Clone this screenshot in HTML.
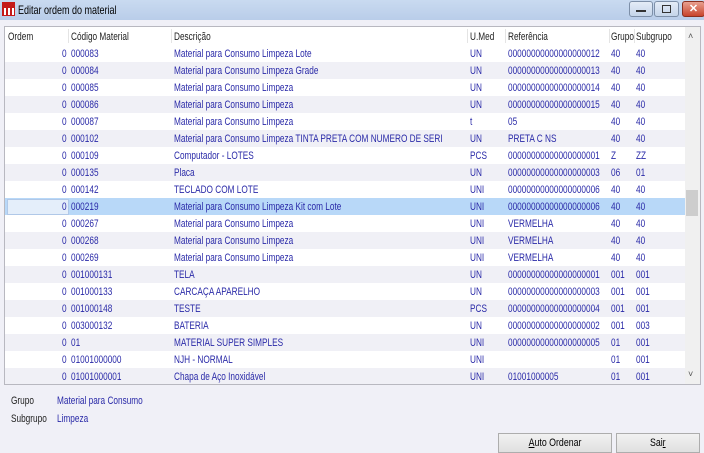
<!DOCTYPE html>
<html><head><meta charset="utf-8"><style>
body{margin:0;width:704px;height:453px;background:#f0f0f7;font-family:"Liberation Sans",sans-serif;font-size:11px;position:relative;overflow:hidden}
.s{display:inline-block;transform:scaleX(0.75);transform-origin:left top;white-space:nowrap}
.tb{position:absolute;left:0;top:0;width:704px;height:20px;background:linear-gradient(#c9daf0,#b9cde9)}
.tb .t{position:absolute;left:18px;top:3px;font-size:12px;color:#000}
.wb{position:absolute;top:1px;height:14px;border:1px solid #7d8fa8;border-radius:3px;background:linear-gradient(#e4ecf7,#c5d5ea)}
.grid{position:absolute;left:4px;top:26px;width:695px;height:357px;background:#fff;border:1px solid #b8b8c0;overflow:hidden}
.hd{position:absolute;top:0;left:0;height:18px;width:680px;background:#fff}
.hd span{position:absolute;top:4px;color:#222}
.r{position:absolute;left:0;width:680px;height:17px}
.r span{position:absolute;top:3px;color:#2a2aa8}
.sb{position:absolute;left:680px;top:0;width:15px;height:357px;background:#f0f0f0}
.lbl{position:absolute;color:#222}
.v{position:absolute;color:#2a2aa8}
.btn{position:absolute;top:433px;height:18px;border:1px solid #adadad;background:linear-gradient(#f2f2f2,#e0e0e0);text-align:center;line-height:18px;color:#000}
.btn i{font-style:normal;display:inline-block;transform:scaleX(0.8)}
</style></head><body>
<div class="tb"><svg style="position:absolute;left:2px;top:2px" width="13" height="14"><rect x="0" y="0" width="13" height="14" fill="#c41a1a"/><rect x="2" y="6" width="2" height="7" fill="#fff"/><rect x="6" y="6" width="2" height="7" fill="#fff"/><rect x="10" y="6" width="2" height="7" fill="#fff"/></svg><span class="t s">Editar ordem do material</span></div>
<div class="wb" style="left:629px;width:22px"><div style="position:absolute;left:6px;top:8px;width:10px;height:2px;background:#333"></div></div>
<div class="wb" style="left:654px;width:23px"><div style="position:absolute;left:7px;top:3px;width:7px;height:6px;border:1px solid #333"></div></div>
<div class="wb" style="left:682px;width:21px;background:linear-gradient(#e8a090,#c8442c);border-color:#8a3020;color:#fff;font-weight:bold;text-align:center;line-height:14px;font-size:11px">✕</div>
<div class="grid">
<div class="hd"><span class="s" style="left:3px">Ordem</span><span class="s" style="left:66px">Código Material</span><span class="s" style="left:169px">Descrição</span><span class="s" style="left:465px">U.Med</span><span class="s" style="left:503px">Referência</span><span class="s" style="left:606px">Grupo</span><span class="s" style="left:631px">Subgrupo</span>
<div style="position:absolute;left:63px;top:2px;height:14px;border-left:1px solid #e4e4e4"></div><div style="position:absolute;left:166px;top:2px;height:14px;border-left:1px solid #e4e4e4"></div><div style="position:absolute;left:462px;top:2px;height:14px;border-left:1px solid #e4e4e4"></div><div style="position:absolute;left:500px;top:2px;height:14px;border-left:1px solid #e4e4e4"></div><div style="position:absolute;left:604px;top:2px;height:14px;border-left:1px solid #e4e4e4"></div><div style="position:absolute;left:629px;top:2px;height:14px;border-left:1px solid #e4e4e4"></div></div>
<div id="rows"></div>
<div class="sb"><div style="position:absolute;left:3px;top:4px;font-size:9px;color:#555">˄</div><div style="position:absolute;left:1px;top:163px;width:12px;height:26px;background:#cdcdcd"></div><div style="position:absolute;left:3px;top:342px;font-size:9px;color:#555">˅</div></div>
</div>
<div class="lbl s" style="left:11px;top:395px">Grupo</div><div class="v s" style="left:57px;top:395px">Material para Consumo</div>
<div class="lbl s" style="left:11px;top:413px">Subgrupo</div><div class="v s" style="left:57px;top:413px">Limpeza</div>
<div class="btn" style="left:498px;width:112px"><i><u>A</u>uto Ordenar</i></div>
<div class="btn" style="left:616px;width:82px"><i>Sai<u>r</u></i></div>
<script>
var d=[["000083","Material para Consumo Limpeza Lote","UN","00000000000000000012","40","40"],
["000084","Material para Consumo Limpeza Grade","UN","00000000000000000013","40","40"],
["000085","Material para Consumo Limpeza","UN","00000000000000000014","40","40"],
["000086","Material para Consumo Limpeza","UN","00000000000000000015","40","40"],
["000087","Material para Consumo Limpeza","t","05","40","40"],
["000102","Material para Consumo Limpeza TINTA PRETA COM NUMERO DE SERI","UN","PRETA C NS","40","40"],
["000109","Computador - LOTES","PCS","00000000000000000001","Z","ZZ"],
["000135","Placa","UN","00000000000000000003","06","01"],
["000142","TECLADO COM LOTE","UNI","00000000000000000006","40","40"],
["000219","Material para Consumo Limpeza Kit com Lote","UNI","00000000000000000006","40","40"],
["000267","Material para Consumo Limpeza","UNI","VERMELHA","40","40"],
["000268","Material para Consumo Limpeza","UNI","VERMELHA","40","40"],
["000269","Material para Consumo Limpeza","UNI","VERMELHA","40","40"],
["001000131","TELA","UN","00000000000000000001","001","001"],
["001000133","CARCAÇA APARELHO","UN","00000000000000000003","001","001"],
["001000148","TESTE","PCS","00000000000000000004","001","001"],
["003000132","BATERIA","UN","00000000000000000002","001","003"],
["01","MATERIAL SUPER SIMPLES","UNI","00000000000000000005","01","001"],
["01001000000","NJH - NORMAL","UNI","","01","001"],
["01001000001","Chapa de Aço Inoxidável","UNI","01001000005","01","001"]];
var h="";d.forEach(function(r,i){var bg=i==9?"#b8d8f8":(i%2?"#f0f0f6":"#fff");
h+='<div class="r" style="top:'+(18+i*17)+'px;background:'+bg+'">'+(i==9?'<div style="position:absolute;left:2px;top:1px;width:60px;height:14px;background:#e4eefa;border:1px solid #b0c8e8"></div>':'')+'<span class="s" style="left:57px">0</span><span class="s" style="left:66px">'+r[0]+'</span><span class="s" style="left:169px">'+r[1]+'</span><span class="s" style="left:465px">'+r[2]+'</span><span class="s" style="left:503px">'+r[3]+'</span><span class="s" style="left:606px">'+r[4]+'</span><span class="s" style="left:631px">'+r[5]+'</span></div>';});
document.getElementById("rows").innerHTML=h;
</script>
</body></html>
